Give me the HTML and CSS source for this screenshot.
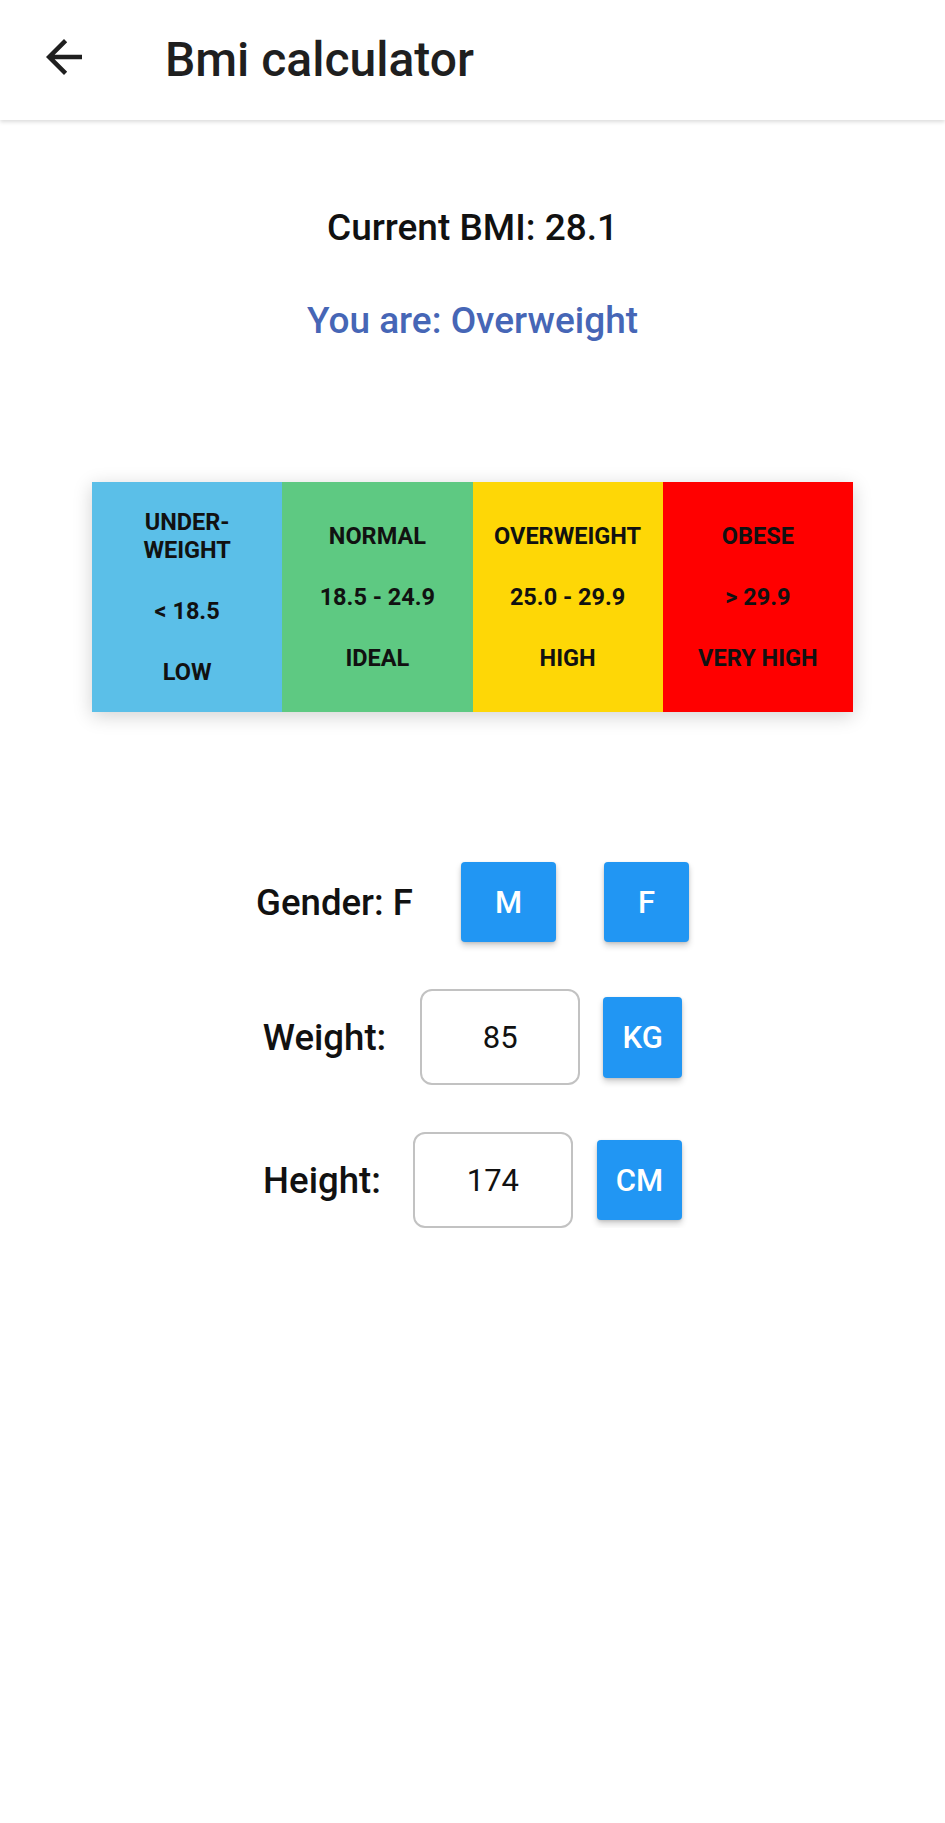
FILE: index.html
```html
<!DOCTYPE html>
<html lang="en">
<head>
<meta charset="utf-8">
<title>Bmi calculator</title>
<link rel="stylesheet" href="styles.css">
</head>
<body>
<header class="appbar">
  <svg class="back" viewBox="0 0 24 24" width="54" height="54" aria-hidden="true"><path d="M20 11H7.83l5.59-5.59L12 4l-8 8 8 8 1.41-1.41L7.83 13H20v-2z" fill="#1f1f1f"/></svg>
  <h1 class="title">Bmi calculator</h1>
</header>
<main class="content">
  <p class="current">Current BMI: 28.1</p>
  <p class="status">You are: Overweight</p>

  <div class="scale">
    <div class="cell cell-under">
      <span>UNDER-<br>WEIGHT</span>
      <span>&lt; 18.5</span>
      <span>LOW</span>
    </div>
    <div class="cell cell-normal">
      <span>NORMAL</span>
      <span>18.5 - 24.9</span>
      <span>IDEAL</span>
    </div>
    <div class="cell cell-over">
      <span>OVERWEIGHT</span>
      <span>25.0 - 29.9</span>
      <span>HIGH</span>
    </div>
    <div class="cell cell-obese">
      <span>OBESE</span>
      <span>&gt; 29.9</span>
      <span>VERY HIGH</span>
    </div>
  </div>

  <div class="form">
    <div class="row row-gender">
      <span class="label">Gender: F</span>
      <button class="btn btn-m">M</button>
      <button class="btn btn-f">F</button>
    </div>
    <div class="row row-weight">
      <span class="label">Weight:</span>
      <div class="field">85</div>
      <button class="btn btn-kg">KG</button>
    </div>
    <div class="row row-height">
      <span class="label">Height:</span>
      <div class="field">174</div>
      <button class="btn btn-cm">CM</button>
    </div>
  </div>
</main>
</body>
</html>
```
FILE: styles.css
```css
* { box-sizing: border-box; }

html, body {
  margin: 0;
  padding: 0;
  background: #ffffff;
  font-family: Roboto, "Noto Sans", "Liberation Sans", sans-serif;
  color: #111111;
}

.appbar {
  height: 120px;
  display: flex;
  align-items: center;
  padding-left: 37px;
  background: #ffffff;
  box-shadow: 0 2px 4px rgba(0, 0, 0, 0.14);
}

.back {
  display: block;
  margin-top: -6px;
}

.title {
  margin: 0 0 0 74px;
  font-size: 48px;
  font-weight: 500;
  color: #1f1f1f;
  line-height: 56px;
}

.content {
  display: flex;
  flex-direction: column;
  align-items: center;
  padding-top: 86px;
}

.current {
  margin: 0;
  font-size: 37px;
  font-weight: 500;
  line-height: 44px;
  color: #111111;
}

.status {
  margin: 49px 0 0;
  font-size: 37px;
  font-weight: 500;
  line-height: 44px;
  color: #4666b6;
}

.scale {
  margin-top: 139px;
  width: 761px;
  height: 230px;
  display: grid;
  grid-template-columns: repeat(4, 1fr);
  box-shadow: 0 4px 18px rgba(0, 0, 0, 0.18);
}

.cell {
  display: flex;
  flex-direction: column;
  align-items: center;
  justify-content: center;
  gap: 33px;
  font-size: 23.5px;
  font-weight: 700;
  line-height: 28px;
  text-align: center;
  color: #111111;
}

.cell-under { background: #5bbfe8; }
.cell-normal { background: #5ec982; }
.cell-over { background: #fed706; }
.cell-obese { background: #ff0000; }

.form {
  margin-top: 150px;
  display: flex;
  flex-direction: column;
  align-items: center;
  gap: 47px;
}

.row {
  display: flex;
  align-items: center;
  justify-content: center;
}

.label {
  font-size: 36.6px;
  font-weight: 500;
  color: #111111;
}

.row-gender { gap: 48px; height: 80px; }
.row-weight .label { margin-right: 34px; }
.row-height .label { margin-right: 32px; }
.row-weight .field { margin-right: 23px; }
.row-height .field { margin-right: 24px; }

.btn {
  height: 80px;
  border: none;
  border-radius: 4px;
  background: #2196f3;
  color: #ffffff;
  font-family: Roboto, "Noto Sans", "Liberation Sans", sans-serif;
  font-size: 31px;
  font-weight: 500;
  padding: 0;
  box-shadow: 0 4px 6px rgba(0, 0, 0, 0.18), 0 1px 3px rgba(0, 0, 0, 0.12);
}

.btn-m { width: 95px; }
.btn-f { width: 85px; }
.btn-kg { width: 79px; height: 81px; }
.btn-cm { width: 85px; }

.field {
  width: 160px;
  height: 96px;
  border: 2px solid #c2c2c2;
  border-radius: 12px;
  display: flex;
  align-items: center;
  justify-content: center;
  font-size: 31px;
  font-weight: 400;
  color: #111111;
}
```
